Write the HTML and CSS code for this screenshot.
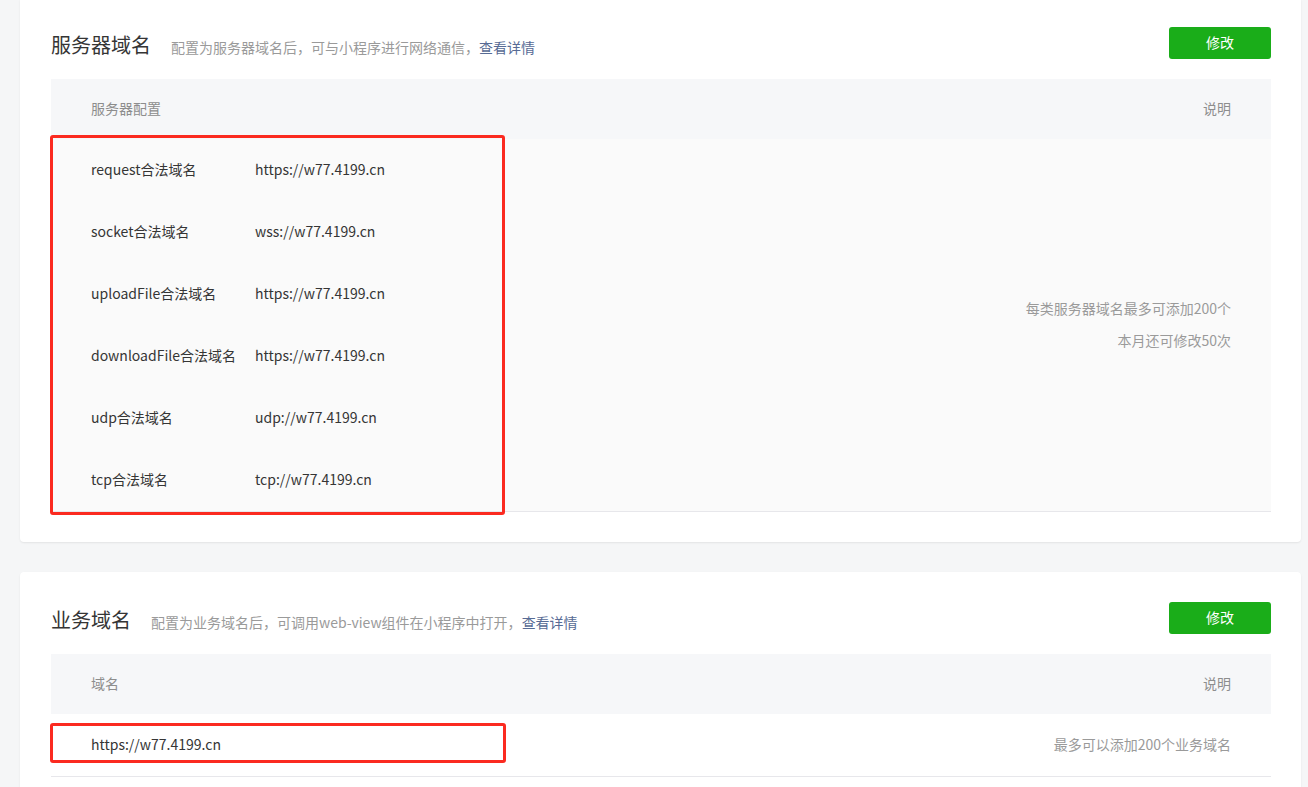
FILE: index.html
```html
<!DOCTYPE html>
<html lang="zh-CN">

<head>
    <meta charset="UTF-8">
    <meta name="viewport" content="width=device-width, initial-scale=1.0">
    <title>开发设置</title>
    <link rel="stylesheet" href="styles.css">
</head>

<body>
    <div class="page">
        <!-- 服务器域名 -->
        <div class="card card-first">
            <div class="card-hd">
                <div class="card-title">
                    <h3>服务器域名</h3>
                    <p class="tips">配置为服务器域名后，可与小程序进行网络通信，<a href="#">查看详情</a></p>
                </div>
                <a class="btn-primary" href="#">修改</a>
            </div>
            <div class="table">
                <div class="thead">
                    <span>服务器配置</span>
                    <span>说明</span>
                </div>
                <div class="tbody tbody-gray">
                    <ul class="domain_list">
                        <li><span class="label">request合法域名</span><span>https://w77.4199.cn</span></li>
                        <li><span class="label">socket合法域名</span><span>wss://w77.4199.cn</span></li>
                        <li><span class="label">uploadFile合法域名</span><span>https://w77.4199.cn</span></li>
                        <li><span class="label">downloadFile合法域名</span><span>https://w77.4199.cn</span></li>
                        <li><span class="label">udp合法域名</span><span>udp://w77.4199.cn</span></li>
                        <li><span class="label">tcp合法域名</span><span>tcp://w77.4199.cn</span></li>
                    </ul>
                    <div class="desc">
                        <p>每类服务器域名最多可添加200个</p>
                        <p>本月还可修改50次</p>
                    </div>
                    <div class="mark mark-list"></div>
                </div>
            </div>
        </div>

        <!-- 业务域名 -->
        <div class="card">
            <div class="card-hd">
                <div class="card-title">
                    <h3>业务域名</h3>
                    <p class="tips">配置为业务域名后，可调用web-view组件在小程序中打开，<a href="#">查看详情</a></p>
                </div>
                <a class="btn-primary" href="#">修改</a>
            </div>
            <div class="table">
                <div class="thead">
                    <span>域名</span>
                    <span>说明</span>
                </div>
                <div class="tbody">
                    <div class="single">https://w77.4199.cn</div>
                    <div class="desc">
                        <p>最多可以添加200个业务域名</p>
                    </div>
                    <div class="mark mark-single"></div>
                </div>
            </div>
        </div>
    </div>
</body>

</html>
```

FILE: styles.css
```css
/* 기본 설정 */
* {
    box-sizing: border-box;
}

body {
    margin: 0;
    padding: 0;
    background-color: #f5f6f7;
    font-family: "Noto Sans CJK SC", "Microsoft YaHei", sans-serif;
    font-size: 14px;
    color: #353535;
    overflow: hidden;
}

.page {
    padding: 0 7px 0 20px;
}

.card {
    background-color: #fff;
    border-radius: 4px;
    box-shadow: 0 1px 2px rgba(0, 0, 0, 0.08);
    padding: 30px 30px 30px 31px;
    margin-bottom: 30px;
}

.card-first {
    margin-top: -3px;
}

.card-hd {
    display: flex;
    align-items: center;
    height: 32px;
    margin-bottom: 20px;
}

.card-title {
    display: flex;
    align-items: baseline;
    margin-top: 2px;
}

.card-title h3 {
    margin: 0;
    font-size: 20px;
    font-weight: normal;
    color: #353535;
}

.tips {
    margin: 0 0 0 20px;
    font-size: 14px;
    color: #9a9a9a;
}

.tips a {
    color: #576b95;
    text-decoration: none;
}

.btn-primary {
    margin-left: auto;
    width: 102px;
    height: 32px;
    line-height: 31px;
    text-align: center;
    background-color: #1aad19;
    color: #fff;
    border-radius: 3px;
    text-decoration: none;
    font-size: 14px;
}

.thead {
    display: flex;
    justify-content: space-between;
    align-items: center;
    height: 60px;
    padding: 0 40px 2px;
    background-color: #f6f7f9;
    color: #8d8d8d;
}

.tbody {
    position: relative;
    display: flex;
    justify-content: space-between;
    align-items: center;
    border-bottom: 1px solid #e7e7eb;
}

.tbody-gray {
    background-color: #fafafa;
}

.domain_list {
    list-style: none;
    margin: 0;
    padding: 0 0 0 40px;
}

.domain_list li {
    display: flex;
    align-items: center;
    height: 62px;
    padding-bottom: 2px;
}

.domain_list .label {
    width: 164px;
}

.single {
    height: 62px;
    line-height: 60px;
    padding-left: 40px;
}

.desc {
    padding: 0 40px 2px 0;
    text-align: right;
    color: #9a9a9a;
}

.desc p {
    margin: 0;
    line-height: 32px;
}

/* 빨간 표시 박스 */
.mark {
    position: absolute;
    left: -1px;
    border: 3px solid #fb2a20;
    border-radius: 3px;
}

.mark-list {
    top: -4px;
    width: 455px;
    height: 380px;
}

.mark-single {
    top: 9px;
    width: 456px;
    height: 40px;
}
```
